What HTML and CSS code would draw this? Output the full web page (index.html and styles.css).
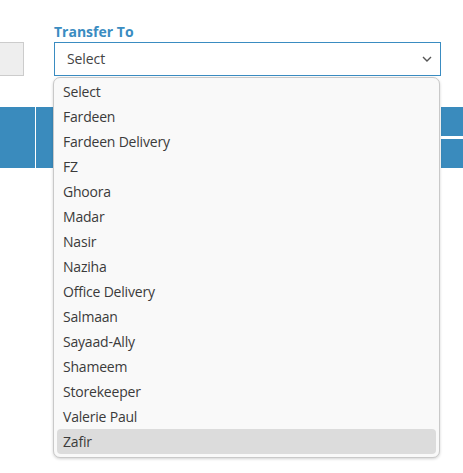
FILE: index.html
```html
<!DOCTYPE html>
<html>
<head>
<meta charset="utf-8">
<link rel="stylesheet" href="styles.css">
</head>
<body>
<div class="page">
  <div class="form-row">
    <div class="left-field"><div class="gray-input"></div></div>
    <div class="form-group">
      <label class="label">Transfer To</label>
      <div class="select">
        <span class="select-text">Select</span>
        <svg class="chev" width="10" height="6" viewBox="0 0 10 6"><path d="M1 1 L5 5 L9 1" fill="none" stroke="#555" stroke-width="1.4"/></svg>
      </div>
      <ul class="dropdown">
        <li>Select</li>
        <li>Fardeen</li>
        <li>Fardeen Delivery</li>
        <li>FZ</li>
        <li>Ghoora</li>
        <li>Madar</li>
        <li>Nasir</li>
        <li>Naziha</li>
        <li>Office Delivery</li>
        <li>Salmaan</li>
        <li>Sayaad-Ally</li>
        <li>Shameem</li>
        <li>Storekeeper</li>
        <li>Valerie Paul</li>
        <li class="active">Zafir</li>
      </ul>
    </div>
    <div class="right-space"></div>
  </div>
  <div class="table-head">
    <div class="th th-a"></div>
    <div class="th th-b"></div>
    <div class="th th-c">
      <div class="sub"></div>
      <div class="sub"></div>
    </div>
  </div>
</div>
</body>
</html>
```
FILE: styles.css
```css
* { box-sizing: border-box; }
html, body { margin: 0; padding: 0; background: #fff; }
body { font-family: "Open Sans", "Noto Sans", sans-serif; font-size: 14px; color: #333; }
.page { width: 463px; height: 473px; overflow: hidden; }
.form-row { display: flex; padding-top: 22px; height: 107px; }
.left-field { width: 54px; padding-top: 20px; }
.gray-input { width: 24px; height: 34px; background: #eeeeee; border: 1px solid #cccccc; border-left: none; }
.form-group { position: relative; width: 387px; }
.label { display: block; font-weight: 700; color: #3a8cc1; font-size: 14px; line-height: 20px; height: 20px; }
.select { display: flex; align-items: center; justify-content: space-between; height: 34px; border: 1px solid #3a8cc1; padding: 0 8px 1px 12px; background: #fff; }
.select-text { color: #444; font-size: 14px; letter-spacing: -0.1px; }
.chev { display: block; margin-top: 1px; }
.dropdown { position: absolute; left: -1px; top: 55px; width: 387px; height: 381px; margin: 0; padding: 1px 3px 3px; list-style: none; background: #f9f9f9; border: 1px solid #c9c9c9; border-radius: 7px; box-shadow: 0 1px 3px rgba(0,0,0,0.18); z-index: 5; }
.dropdown li { height: 25px; line-height: 25px; padding-left: 6px; color: #3b3b3b; font-size: 14px; letter-spacing: -0.2px; border-radius: 4px; }
.dropdown li.active { background: #dcdcdc; }
.right-space { flex: 1; }
.table-head { display: flex; height: 61px; }
.th { background: #3a8bbd; }
.th-a { width: 35px; margin-right: 1px; }
.th-b { width: 404px; margin-right: 1px; }
.th-c { flex: 1; display: flex; flex-direction: column; gap: 3px; background: transparent; }
.sub { flex: 1; background: #3a8bbd; }
```
